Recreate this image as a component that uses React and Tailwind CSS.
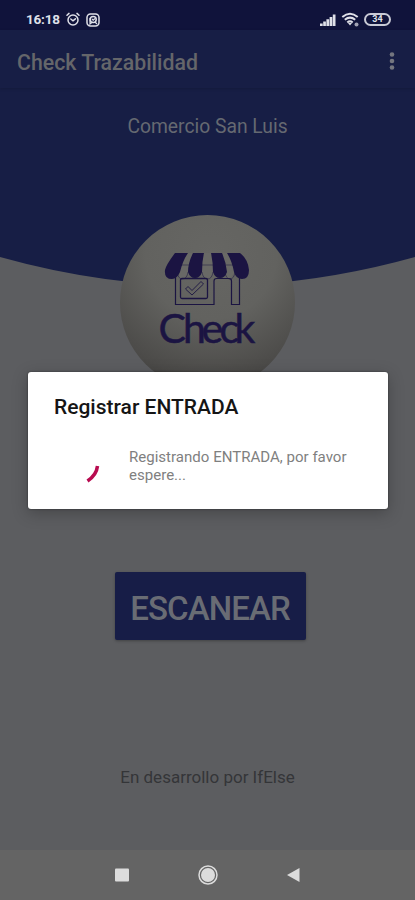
import React from 'react';

function StatusBar() {
  return (
    <div className="h-[30px] shrink-0 bg-[#10133b] pl-[26px] pr-[24px] pt-[9px] flex items-start justify-between text-[#dfe0e8]">
      <div className="flex items-center h-[21px]">
        <span className="w-[35px] text-[13.5px] tracking-[-0.2px] leading-[21px] font-bold whitespace-nowrap">16:18</span>
        <svg className="ml-[5px]" width="14" height="15" viewBox="0 0 14 15" fill="none" stroke="currentColor" strokeWidth="1.5" strokeLinecap="round">
          <circle cx="7" cy="8" r="5" />
          <path d="M1 3.2 3 1.4M13 3.2 11 1.4M4.8 7 7 8.8 9.4 6.8" />
        </svg>
        <svg className="ml-[6px]" width="14" height="14" viewBox="0 0 14 14" fill="none" stroke="currentColor" strokeWidth="1.5">
          <rect x="1" y="1" width="12" height="12" rx="3.5" />
          <circle cx="7.2" cy="6.4" r="3" />
          <path d="M4 5v6l2.500-2M6 6l1.200 1.200L9 5.500M9 9l2 2" strokeWidth="1.200" />
        </svg>
      </div>
      <div className="flex items-center h-[21px]">
        <svg width="18" height="14" viewBox="0 0 18 14" fill="currentColor">
          <path d="M1 10.500h2.700V13H1zM4.200 8.500h2.700V13H4.200zM7.400 6.300h2.700V13H7.400zM10.600 4h2.700v9h-2.700zM13.800 1.500h2.700V13h-2.700z" />
        </svg>
        <svg className="ml-[4px]" width="19" height="15" viewBox="0 0 19 15" fill="none" stroke="currentColor" strokeWidth="2">
          <path d="M1.300 5Q9 -1.500 16.700 5M3.800 7.800Q9 3.500 14.200 7.800M6.300 10.400Q9 8 11.700 10.400" />
          <path d="M6.800 10.800h4.400L9 13.500z" fill="currentColor" stroke="none" />
          <circle cx="15.500" cy="12.500" r="2" fill="currentColor" stroke="none" opacity="0.7" />
        </svg>
        <span className="ml-[4px] w-[27px] h-[13px] rounded-full border-2 border-[#c9cad6] flex items-center justify-center text-[9px] leading-none font-bold">
          34
        </span>
      </div>
    </div>
  );
}

function StoreLogo() {
  return (
    <svg width="175" height="175" viewBox="0 0 175 175" fill="none" stroke="#1b1442">
      {/* awning */}
      <g stroke="none">
        <path d="M60 38h54v19q-5 13-10 0H93q-5.500 13-11 0H68q-5.500 13-11 0z" fill="#696966" />
        <path d="M55 38h13q-5 7-8 19-3 7-8 7-8 0-7-9Q46 50 55 38z" fill="#1b1442" />
        <path d="M73 38h11q-2 8-2 19-2 6-7 6t-7-6q0-9 5-19z" fill="#1b1442" />
        <path d="M91 38h11q4 9 5 19-2 6-7 6t-7-6q0-10-2-19z" fill="#1b1442" />
        <path d="M107 38h13q8 6 9 17 0 9-7 9-6 0-8-7-2-11-7-19z" fill="#1b1442" />
      </g>
      <path d="M57 57q1 7 5.500 7t5.500-7M82 57q1 7 5.500 7t5.500-7M105 57q1 7 5 7t5-7M60 50h9M82 50h11M106 50h7" strokeWidth="0.5" />
      {/* walls, window and door */}
      <path d="M55.500 62v27.500H94V66q0-2.500 2.500-2.500h12.500q2.500 0 2.500 2.500v23.500h8V61" strokeWidth="1.200" />
      <rect x="60.500" y="63.500" width="27" height="20" rx="1.500" strokeWidth="1.300" />
      <path d="M65.500 74 68 71.500l4 4 9-9 2.500 2.500L72 80z" strokeWidth="0.900" />
      <text
        x="38.500 63 81.500 99.500 114.500"
        y="128"
        fontFamily="Lato, sans-serif"
        fontSize="41"
        fill="#1b1442"
        strokeWidth="0.5"
      >
        Check
      </text>
    </svg>
  );
}

function ProgressDialog() {
  return (
    <div className="absolute left-[28px] right-[27px] top-[372px] h-[137px] rounded-[3px] bg-white pl-[26px] pt-[22px] shadow-[0_4px_16px_rgba(0,0,0,0.25),0_0_2px_rgba(0,0,0,0.5)]">
      <h2 className="text-[21px] leading-[26px] font-medium text-[#151515] whitespace-nowrap">Registrar ENTRADA</h2>
      <div className="mt-[28px] flex">
        <svg className="mt-[-3px] ml-[6px]" width="44" height="44" viewBox="0 0 44 44" fill="none">
          <path d="M37.500 21Q36.500 30 27.500 36" stroke="#b80c50" strokeWidth="3.500" />
        </svg>
        <p className="ml-[25px] text-[15.05px] leading-[18px] text-[#7f7f7f] whitespace-nowrap">
          Registrando ENTRADA, por favor
          <br />
          espere...
        </p>
      </div>
    </div>
  );
}

export default function App() {
  return (
    <div className="relative w-full h-[900px] overflow-hidden bg-[#5c5d60] flex flex-col font-['Roboto',sans-serif]">
      <StatusBar />

      <header className="h-[58px] shrink-0 bg-[#171e45] pl-[17px] pr-[19px] flex items-center justify-between shadow-[0_1px_3px_rgba(0,0,0,0.15)] z-10">
        <h1 className="pt-[8px] text-[21.3px] leading-[26px] font-medium text-[#65666a] whitespace-nowrap">Check Trazabilidad</h1>
        <svg className="mt-[4px]" width="8" height="20" viewBox="0 0 8 20" fill="#74767f">
          <circle cx="4" cy="3.500" r="2.300" />
          <circle cx="4" cy="10" r="2.300" />
          <circle cx="4" cy="16.500" r="2.300" />
        </svg>
      </header>

      <main className="relative flex-1 flex flex-col items-center">
        <svg className="absolute top-0 left-0 w-full h-[200px]" viewBox="0 0 415 200" preserveAspectRatio="none">
          <path d="M0 0H415V169Q207.500 227 0 169Z" fill="#171e45" />
        </svg>
        <p className="relative mt-[26px] text-[19.3px] leading-[25px] text-[#656971] whitespace-nowrap">Comercio San Luis</p>
        <div className="relative mt-[76px] size-[175px] rounded-full bg-[radial-gradient(circle_at_52%_22%,#666663_0%,#62625f_40%,#4c4b49_75%,#383735_100%)]">
          <StoreLogo />
        </div>
        <button className="ml-[5px] mt-[182px] w-[191px] h-[68px] shrink-0 rounded-[2px] bg-[#171d47] text-[33px] tracking-[-0.9px] leading-none font-medium text-[#696c74] pt-[4px] shadow-[0_1px_3px_rgba(0,0,0,0.3)]">
          ESCANEAR
        </button>
        <p className="mt-[125px] text-[17px] leading-[24px] text-[#343538] whitespace-nowrap">En desarrollo por IfElse</p>
      </main>

      <nav className="h-[50px] shrink-0 bg-[#646464] flex items-center justify-center gap-[64px] text-[#dcdcdc]">
        <svg width="22" height="22" viewBox="0 0 22 22" fill="currentColor">
          <rect x="4" y="4.500" width="14" height="13" rx="1" />
        </svg>
        <svg width="22" height="22" viewBox="0 0 22 22" fill="currentColor">
          <circle cx="11" cy="11" r="7" />
          <circle cx="11" cy="11" r="9" fill="none" stroke="currentColor" strokeWidth="1.500" />
        </svg>
        <svg width="22" height="22" viewBox="0 0 22 22" fill="currentColor">
          <path d="M16.500 4v14L4 11z" />
        </svg>
      </nav>

      <ProgressDialog />
    </div>
  );
}
